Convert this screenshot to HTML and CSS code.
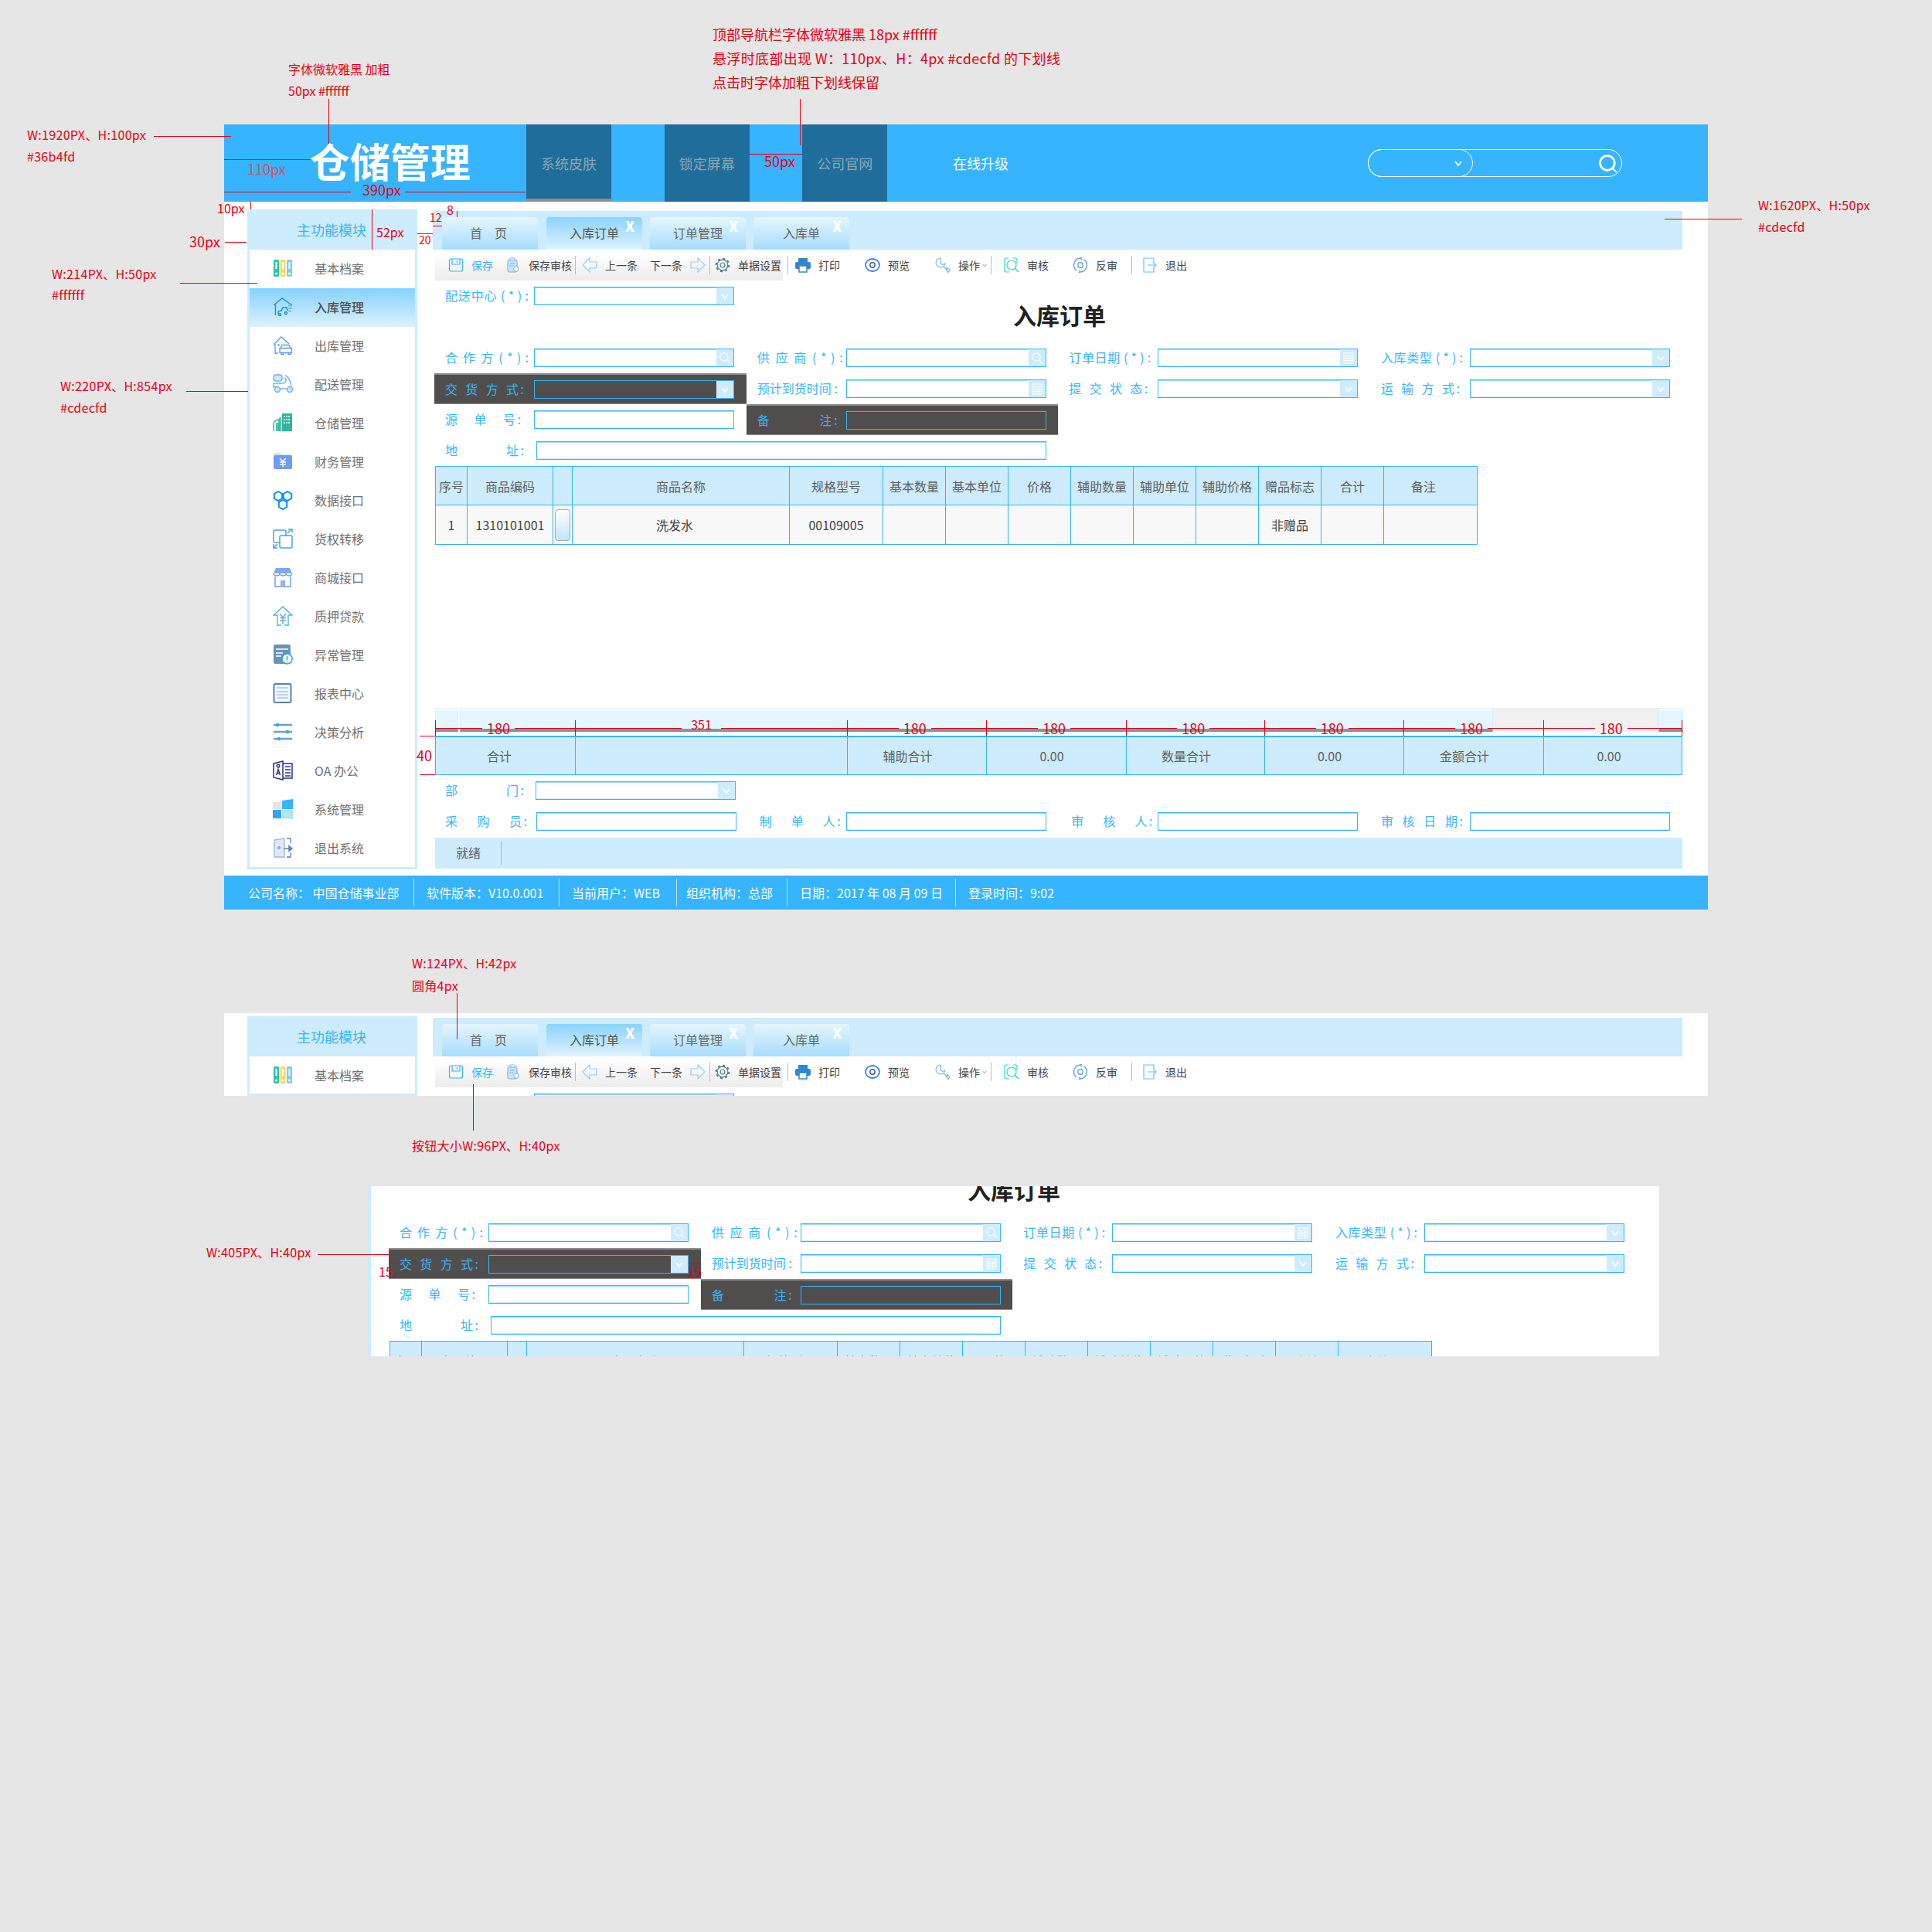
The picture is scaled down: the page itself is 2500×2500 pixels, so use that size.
FILE: index.html
```html
<!DOCTYPE html>
<html lang="zh-CN">
<head>
    <meta charset="UTF-8">
    <meta name="viewport" content="width=device-width, initial-scale=1.0">
    <title>仓储管理</title>
    <link rel="stylesheet" href="styles.css">
</head>
<body>
<svg class="sprite" xmlns="http://www.w3.org/2000/svg">
    <symbol id="i-files" viewBox="0 0 26 26">
        <rect x="1" y="2" width="7" height="22" rx="1.5" fill="#2ec4a6"/><rect x="9.5" y="2" width="7" height="22" rx="1.5" fill="#ffd966"/><rect x="18" y="2" width="7" height="22" rx="1.5" fill="#7fcbf8"/>
        <path d="M4.5 5v9M13 5v9M21.5 5v9" stroke="#fff" stroke-width="2"/>
        <circle cx="4.5" cy="20" r="1.5" fill="#fff"/><circle cx="13" cy="20" r="1.5" fill="#fff"/><circle cx="21.5" cy="20" r="1.5" fill="#fff"/>
    </symbol>
    <symbol id="i-in" viewBox="0 0 26 26">
        <g fill="none" stroke="#1d8fdd" stroke-width="1.5"><path d="M1 11 12 2l13 9M3.500 10v14"/><path d="M7 22v-3l4-1 2-4h5l1 4"/><circle cx="9" cy="23" r="1.600"/><circle cx="17" cy="21" r="1.600"/><path d="M20 11.500h5M20 15h5M20 18.500h4" stroke="#55b6ee"/></g>
    </symbol>
    <symbol id="i-out" viewBox="0 0 26 26">
        <g fill="none" stroke="#5f9bd8" stroke-width="1.300"><path d="M1 12 11 2l10 9M3 11v12h4"/><path d="M10 16.500l2-4h9l2 4h1.500v6H9v-6zM10 16.500h14"/><path d="M11 22.500v2h3v-2M20 22.500v2h3v-2"/><circle cx="7.500" cy="12.500" r=".7"/></g>
    </symbol>
    <symbol id="i-scooter" viewBox="0 0 26 26">
        <g fill="none" stroke="#74b4e6" stroke-width="1.400"><rect x="1" y="1" width="11" height="8" rx="3" fill="#cfe7f9"/><path d="M16 2c5 1 8 10 8 17H9c-2-2-7-3-8-2v-5h10c4 0 6-2 6-4 0-2-1-3-2-3"/><circle cx="6" cy="20" r="3.500" fill="#cfe7f9"/><circle cx="22" cy="20" r="3.500" fill="#cfe7f9"/></g>
    </symbol>
    <symbol id="i-city" viewBox="0 0 26 26">
        <path d="M1 24v-9c0-3 2-5 6-6h1v15" fill="none" stroke="#2bb89c" stroke-width="1.400"/><path d="M4 22v-9h4V7l3-2V24H4z" fill="#2bb89c" opacity=".8"/><rect x="12" y="1" width="13" height="23" fill="#2bb89c"/>
        <path d="M15 4v2M18 4v2M21 4v2M15 8v2M18 8v2M21 8v2M15 12v2M18 12v2M21 12v2" stroke="#fff" stroke-width="1.500"/>
    </symbol>
    <symbol id="i-folder" viewBox="0 0 26 26">
        <path d="M1 6c0-3 1-4 3-4h5c2 0 3 1 3 4z" fill="#cfe0fb"/><rect x="1" y="5" width="24" height="18" rx="2" fill="#6e9cf0"/><path d="M9 9l4 4 4-4M13 13v7M9 14h8M9 17h8" stroke="#fff" stroke-width="1.400" fill="none"/>
    </symbol>
    <symbol id="i-hex" viewBox="0 0 26 26">
        <g fill="none" stroke="#0a8fee" stroke-width="2"><path d="M7 2l5.200 3v6L7 14l-5.200-3V5z"/><path d="M19 2l5.200 3v6L19 14l-5.200-3V5z"/><path d="M13 13l5.200 3v6L13 25l-5.200-3v-6z"/></g>
    </symbol>
    <symbol id="i-transfer" viewBox="0 0 26 26">
        <g fill="none" stroke="#4aa8d8" stroke-width="1.500"><rect x="1" y="2" width="16" height="16" rx="2"/><rect x="9" y="9" width="16" height="16" rx="2" fill="#fff"/><path d="M19 6l5-5M20 1h5v4M1 20v5h5M1 25l5-5"/></g>
    </symbol>
    <symbol id="i-shop" viewBox="0 0 26 26">
        <path d="M4 1h18l3 7H1z" fill="#7fa8f0"/><path d="M1 8a4 3 0 0 0 8 0 4 3 0 0 0 8 0 4 3 0 0 0 8 0" fill="none" stroke="#6fa0ee" stroke-width="1.500"/><path d="M3 12v13h20V12" fill="none" stroke="#6fa0ee" stroke-width="1.500"/><rect x="10" y="17" width="6" height="8" fill="#8fb4f2"/>
    </symbol>
    <symbol id="i-pawn" viewBox="0 0 26 26">
        <path d="M11 25H6V12H1L13 1l12 11h-5v13h-5M9 10l4 5 4-5M13 15v9M9 15.500h8M9 19h8" fill="none" stroke="#55b2e0" stroke-width="1.400"/>
    </symbol>
    <symbol id="i-alert" viewBox="0 0 26 26">
        <rect x="1" y="0" width="22" height="25" rx="2" fill="#6b93b8"/><path d="M4 6h16M4 11h9M4 15h7" stroke="#fff" stroke-width="1.500"/><circle cx="18.500" cy="18.500" r="6.500" fill="#fff" stroke="#2fa0f0" stroke-width="1.500"/><path d="M18.500 15v5M18.500 21v1.500" stroke="#2fa0f0" stroke-width="1.500"/>
    </symbol>
    <symbol id="i-report" viewBox="0 0 26 26">
        <rect x="1.500" y="1" width="22" height="24" rx="1.500" fill="#f3f8fd" stroke="#2a5a9e" stroke-width="1.500"/><path d="M5 6h15M5 11h15M5 15h15M5 19h15" stroke="#a8c8e8" stroke-width="1.600"/>
    </symbol>
    <symbol id="i-sliders" viewBox="0 0 26 26">
        <path d="M1 4h24M1 13h24M1 22h24" stroke="#6f9fcc" stroke-width="2.400"/><circle cx="6" cy="4" r="2.200" fill="#36a6f0"/><circle cx="19" cy="13" r="2.200" fill="#36a6f0"/><circle cx="8" cy="22" r="2.200" fill="#36a6f0"/>
    </symbol>
    <symbol id="i-oa" viewBox="0 0 26 26">
        <g fill="none" stroke="#2a2f86" stroke-width="1.500"><path d="M1 4l12-3v24L1 22z"/><path d="M13 4h12v19H13"/><circle cx="7" cy="7" r="1.800"/><path d="M4.500 19 7 11.500 9.500 19M5.500 16.500h3M16 8h7M16 12h7M16 16h7M16 20h7"/></g>
    </symbol>
    <symbol id="i-win" viewBox="0 0 26 26">
        <path d="M0 4l11-1v10H0z" fill="#e4e4e4"/><path d="M12 2l14-2v13H12z" fill="#36b4fd"/><path d="M0 14h11v11H0z" fill="#36a6f0"/><path d="M12 14h14v12l-14-1z" fill="#b0e6fb"/>
    </symbol>
    <symbol id="i-quit" viewBox="0 0 26 26">
        <path d="M2 3l13-2v24H2z" fill="#e2e8fa" stroke="#9fb5e8" stroke-width="1.300"/><circle cx="8" cy="13" r="1.400" fill="none" stroke="#5a7cc0"/><path d="M18 1h5v6M23 19v6h-5" fill="none" stroke="#5a7cc0" stroke-width="1.300"/><path d="M14 14h10M21 10.500l4 3.500-4 3.500z" fill="#5a7cc0" stroke="#5a7cc0" stroke-width="1.400"/>
    </symbol>

    <symbol id="t-save" viewBox="0 0 20 20">
        <g fill="none" stroke="#36b4fd" stroke-width="1.200"><rect x="1.500" y="2" width="17" height="16" rx="2"/><path d="M5 2v7h10V2M11.500 4v3"/></g>
    </symbol>
    <symbol id="t-clip" viewBox="0 0 20 20">
        <rect x="3" y="3" width="12" height="16" rx="2" fill="#cfe4f6" stroke="#6fb3e8"/><rect x="6" y="1" width="6" height="3.500" rx="1" fill="#fff" stroke="#6fb3e8"/><path d="M5.500 8h7M5.500 11h5" stroke="#6fb3e8"/><circle cx="14" cy="15" r="3.200" fill="#fff" stroke="#6fb3e8"/>
    </symbol>
    <symbol id="t-left" viewBox="0 0 20 20"><path d="M10 1 1 10l9 9v-5h9V6h-9z" fill="none" stroke="#8fd0f8" stroke-width="1.200"/></symbol>
    <symbol id="t-right" viewBox="0 0 20 20"><path d="M10 1l9 9-9 9v-5H1V6h9z" fill="none" stroke="#8fd0f8" stroke-width="1.200"/></symbol>
    <symbol id="t-gear" viewBox="0 0 20 20">
        <g fill="none" stroke="#4d7d90"><circle cx="10" cy="10" r="6.800" stroke-width="1.200"/><circle cx="10" cy="10" r="8.300" stroke-width="2" stroke-dasharray="3 3.500"/><circle cx="10" cy="10" r="3" stroke-width="1.200"/></g>
    </symbol>
    <symbol id="t-print" viewBox="0 0 20 20">
        <rect x="4" y="1" width="12" height="5" fill="#2f87d0"/><rect x="0" y="6" width="20" height="9" rx="2" fill="#2f87d0"/><rect x="5" y="11" width="10" height="8" fill="#fff" stroke="#2f87d0" stroke-width="1.500"/>
    </symbol>
    <symbol id="t-eye" viewBox="0 0 20 20"><ellipse cx="10" cy="10" rx="9" ry="8" fill="none" stroke="#3b82e6" stroke-width="1.800"/><circle cx="10" cy="10" r="3.200" fill="none" stroke="#4d5d80" stroke-width="1.500"/></symbol>
    <symbol id="t-wrench" viewBox="0 0 20 20"><path d="M7 1a6 6 0 1 0 6 7L9.500 9.500 6.500 6.500zM11.500 12l5 5M14 15.500l2.500-2 3 3-2.500 3z" fill="none" stroke="#7cb8e8" stroke-width="1.200"/></symbol>
    <symbol id="t-audit" viewBox="0 0 20 20">
        <g fill="none" stroke="#28dccc" stroke-width="1.200"><path d="M6 1H3a2 2 0 0 0-2 2v14a2 2 0 0 0 2 2h4M12 1h3a2 2 0 0 1 2 2v5"/><circle cx="10" cy="10" r="6"/><path d="M14.500 14.500 19 19" stroke-width="1.600"/></g>
    </symbol>
    <symbol id="t-undo" viewBox="0 0 20 20">
        <g fill="none" stroke="#5f9fdc" stroke-width="1.300"><path d="M11 1a9 9 0 0 0-6 16M9 19a9 9 0 0 0 6-16"/><path d="M12 0l-2 1.500 2 1.500M8 20l2-1.500L8 17"/><rect x="7" y="7" width="6" height="6" rx="1"/></g>
    </symbol>
    <symbol id="t-exit" viewBox="0 0 20 20"><path d="M15 6V1H2v18h13v-5M7 10h11M14 6l4 4-4 4" fill="none" stroke="#60c8f0" stroke-width="1.200"/></symbol>
    <symbol id="a-down" viewBox="0 0 16 16"><path d="M4 6l4 5 4-5" fill="none" stroke="#fff" stroke-width="1.800"/></symbol>
    <symbol id="a-search" viewBox="0 0 16 16"><circle cx="7" cy="7" r="5.200" fill="none" stroke="#fff" stroke-width="1.200"/><path d="M11 11l4 4" stroke="#fff" stroke-width="1.200"/></symbol>
    <symbol id="a-date" viewBox="0 0 16 16"><rect x="2" y="2" width="12" height="13" fill="none" stroke="#fff"/><path d="M2 5.500h12M2 8.500h12M2 11.500h12M6 5.500v9M10 5.500v9" stroke="#fff"/></symbol>
    <symbol id="h-search" viewBox="0 0 20 20"><circle cx="9.500" cy="9.500" r="7.500" fill="none" stroke="#fff" stroke-width="2.200"/><path d="M15 15l4 4" stroke="#fff" stroke-width="1.500"/></symbol>
</svg>

<div class="canvas">

    <section class="window window-main">
        <header class="topbar">
            <div class="logo">仓储管理</div>
            <nav class="nav">
                <a class="nav-item nav-hover">系统皮肤</a>
                <a class="nav-item nav-dim">锁定屏幕</a>
                <a class="nav-item nav-dim">公司官网</a>
                <a class="nav-item nav-plain">在线升级</a>
            </nav>
            <div class="search">
                <div class="search-type"><svg class="search-caret"><use href="#a-down"/></svg></div>
                <svg class="search-icon"><use href="#h-search"/></svg>
            </div>
        </header>

        <div class="workspace">
            <aside class="sidebar sidebar-full">
                <div class="side-head">主功能模块</div>
                <a class="side-item"><svg class="side-icon"><use href="#i-files"/></svg>基本档案</a>
                <a class="side-item active"><svg class="side-icon"><use href="#i-in"/></svg>入库管理</a>
                <a class="side-item"><svg class="side-icon"><use href="#i-out"/></svg>出库管理</a>
                <a class="side-item"><svg class="side-icon"><use href="#i-scooter"/></svg>配送管理</a>
                <a class="side-item"><svg class="side-icon"><use href="#i-city"/></svg>仓储管理</a>
                <a class="side-item"><svg class="side-icon"><use href="#i-folder"/></svg>财务管理</a>
                <a class="side-item"><svg class="side-icon"><use href="#i-hex"/></svg>数据接口</a>
                <a class="side-item"><svg class="side-icon"><use href="#i-transfer"/></svg>货权转移</a>
                <a class="side-item"><svg class="side-icon"><use href="#i-shop"/></svg>商城接口</a>
                <a class="side-item"><svg class="side-icon"><use href="#i-pawn"/></svg>质押贷款</a>
                <a class="side-item"><svg class="side-icon"><use href="#i-alert"/></svg>异常管理</a>
                <a class="side-item"><svg class="side-icon"><use href="#i-report"/></svg>报表中心</a>
                <a class="side-item"><svg class="side-icon"><use href="#i-sliders"/></svg>决策分析</a>
                <a class="side-item"><svg class="side-icon"><use href="#i-oa"/></svg>OA 办公</a>
                <a class="side-item"><svg class="side-icon"><use href="#i-win"/></svg>系统管理</a>
                <a class="side-item"><svg class="side-icon"><use href="#i-quit"/></svg>退出系统</a>
            </aside>

            <div class="content">
                <div class="tabs">
                    <div class="tab">首　页</div>
                    <div class="tab tab-active">入库订单<span class="tab-close">X</span></div>
                    <div class="tab">订单管理<span class="tab-close">X</span></div>
                    <div class="tab">入库单<span class="tab-close">X</span></div>
                </div>
                <div class="toolbar">
                    <a class="tool tool-save"><svg class="tool-icon"><use href="#t-save"/></svg>保存</a>
                    <a class="tool"><svg class="tool-icon"><use href="#t-clip"/></svg>保存审核</a>
                    <i class="tool-sep"></i>
                    <a class="tool"><svg class="tool-icon"><use href="#t-left"/></svg>上一条</a>
                    <a class="tool">下一条<svg class="tool-icon"><use href="#t-right"/></svg></a>
                    <i class="tool-sep"></i>
                    <a class="tool"><svg class="tool-icon"><use href="#t-gear"/></svg>单据设置</a>
                    <i class="tool-sep"></i>
                    <a class="tool"><svg class="tool-icon"><use href="#t-print"/></svg>打印</a>
                    <a class="tool"><svg class="tool-icon"><use href="#t-eye"/></svg>预览</a>
                    <a class="tool"><svg class="tool-icon"><use href="#t-wrench"/></svg>操作<svg class="tool-caret"><use href="#a-down"/></svg></a>
                    <i class="tool-sep"></i>
                    <a class="tool"><svg class="tool-icon"><use href="#t-audit"/></svg>审核</a>
                    <a class="tool"><svg class="tool-icon"><use href="#t-undo"/></svg>反审</a>
                    <i class="tool-sep"></i>
                    <a class="tool"><svg class="tool-icon"><use href="#t-exit"/></svg>退出</a>
                </div>

                <div class="form-grid">
                    <div class="field"><label class="label lw-108">配送中心 ( * ) :</label><div class="input"><span class="addon"><svg><use href="#a-down"/></svg></span></div></div>
                </div>
                <h1 class="doc-title">入库订单</h1>
                <div class="form-grid">
                    <div class="field"><label class="label lw-108">合 作 方 ( * ) :</label><div class="input"><span class="addon"><svg><use href="#a-search"/></svg></span></div></div>
                    <div class="field"><label class="label lw-111">供 应 商 ( * ) :</label><div class="input"><span class="addon"><svg><use href="#a-search"/></svg></span></div></div>
                    <div class="field"><label class="label lw-106">订单日期 ( * ) :</label><div class="input"><span class="addon"><svg><use href="#a-date"/></svg></span></div></div>
                    <div class="field"><label class="label lw-106">入库类型 ( * ) :</label><div class="input"><span class="addon"><svg><use href="#a-down"/></svg></span></div></div>
                    <div class="field field-dark"><label class="label lw-102">交 货 方 <span class="nb">式 :</span></label><div class="input"><span class="addon"><svg><use href="#a-down"/></svg></span></div></div>
                    <div class="field"><label class="label lw-104">预计到货时间 :</label><div class="input"><span class="addon"><svg><use href="#a-date"/></svg></span></div></div>
                    <div class="field"><label class="label lw-102">提 交 状 <span class="nb">态 :</span></label><div class="input"><span class="addon"><svg><use href="#a-down"/></svg></span></div></div>
                    <div class="field"><label class="label lw-102">运 输 方 <span class="nb">式 :</span></label><div class="input"><span class="addon"><svg><use href="#a-down"/></svg></span></div></div>
                    <div class="field"><label class="label lw-98">源 单 <span class="nb">号 :</span></label><div class="input"></div></div>
                    <div class="field field-dark"><label class="label lw-104">备 <span class="nb">注 :</span></label><div class="input"></div></div>
                    <div class="field field-span"><label class="label label-addr lw-102">地 <span class="nb">址 :</span></label><div class="input input-wide"></div></div>
                </div>

                <div class="table-area">
                    <table class="goods">
                        <thead>
                            <tr><th>序号</th><th>商品编码</th><th></th><th>商品名称</th><th>规格型号</th><th>基本数量</th><th>基本单位</th><th>价格</th><th>辅助数量</th><th>辅助单位</th><th>辅助价格</th><th>赠品标志</th><th>合计</th><th>备注</th></tr>
                        </thead>
                        <tbody>
                            <tr><td>1</td><td>1310101001</td><td><span class="pick"></span></td><td>洗发水</td><td>00109005</td><td></td><td></td><td></td><td></td><td></td><td></td><td>非赠品</td><td></td><td></td></tr>
                        </tbody>
                    </table>
                </div>

                <div class="scroller">
                    <span class="thumb thumb-start"></span>
                    <span class="thumb thumb-main"></span>
                    <span class="track"></span>
                    <span class="thumb thumb-end"></span>
                </div>

                <div class="totals-wrap">
                    <div class="dims">
                        <div class="dim"><span>180</span></div>
                        <div class="dim dim-raised"><span>351</span></div>
                        <div class="dim"><span>180</span></div>
                        <div class="dim"><span>180</span></div>
                        <div class="dim"><span>180</span></div>
                        <div class="dim"><span>180</span></div>
                        <div class="dim"><span>180</span></div>
                        <div class="dim"><span>180</span></div>
                    </div>
                    <div class="totals">
                        <div>合计</div><div></div><div>辅助合计</div><div>0.00</div><div>数量合计</div><div>0.00</div><div>金额合计</div><div>0.00</div>
                    </div>
                </div>

                <div class="form-grid">
                    <div class="field field-full"><label class="label label-bottom lw-102">部 <span class="nb">门 :</span></label><div class="input"><span class="addon"><svg><use href="#a-down"/></svg></span></div></div>
                    <div class="field"><label class="label label-bottom-wide lw-106">采 购 <span class="nb">员 :</span></label><div class="input"></div></div>
                    <div class="field"><label class="label label-inset lw-105">制 单 <span class="nb">人 :</span></label><div class="input"></div></div>
                    <div class="field"><label class="label label-inset lw-105">审 核 <span class="nb">人 :</span></label><div class="input"></div></div>
                    <div class="field"><label class="label lw-106">审 核 日 <span class="nb">期 :</span></label><div class="input"></div></div>
                </div>

                <div class="ready"><span class="ready-text">就绪</span></div>
            </div>
        </div>

        <footer class="statusbar">
            <div>公司名称： 中国仓储事业部</div>
            <div>软件版本：V10.0.001</div>
            <div>当前用户：WEB</div>
            <div>组织机构：总部</div>
            <div>日期：2017 年 08 月 09 日</div>
            <div>登录时间：9:02</div>
        </footer>
    </section>

    <section class="window window-strip">
        <div class="workspace workspace-strip">
            <aside class="sidebar">
                <div class="side-head">主功能模块</div>
                <a class="side-item"><svg class="side-icon"><use href="#i-files"/></svg>基本档案</a>
            </aside>
            <div class="content">
                <div class="tabs">
                    <div class="tab">首　页</div>
                    <div class="tab tab-active">入库订单<span class="tab-close">X</span></div>
                    <div class="tab">订单管理<span class="tab-close">X</span></div>
                    <div class="tab">入库单<span class="tab-close">X</span></div>
                </div>
                <div class="toolbar">
                    <a class="tool tool-save"><svg class="tool-icon"><use href="#t-save"/></svg>保存</a>
                    <a class="tool"><svg class="tool-icon"><use href="#t-clip"/></svg>保存审核</a>
                    <i class="tool-sep"></i>
                    <a class="tool"><svg class="tool-icon"><use href="#t-left"/></svg>上一条</a>
                    <a class="tool">下一条<svg class="tool-icon"><use href="#t-right"/></svg></a>
                    <i class="tool-sep"></i>
                    <a class="tool"><svg class="tool-icon"><use href="#t-gear"/></svg>单据设置</a>
                    <i class="tool-sep"></i>
                    <a class="tool"><svg class="tool-icon"><use href="#t-print"/></svg>打印</a>
                    <a class="tool"><svg class="tool-icon"><use href="#t-eye"/></svg>预览</a>
                    <a class="tool"><svg class="tool-icon"><use href="#t-wrench"/></svg>操作<svg class="tool-caret"><use href="#a-down"/></svg></a>
                    <i class="tool-sep"></i>
                    <a class="tool"><svg class="tool-icon"><use href="#t-audit"/></svg>审核</a>
                    <a class="tool"><svg class="tool-icon"><use href="#t-undo"/></svg>反审</a>
                    <i class="tool-sep"></i>
                    <a class="tool"><svg class="tool-icon"><use href="#t-exit"/></svg>退出</a>
                </div>
                <div class="form-grid">
                    <div class="field"><label class="label lw-108"></label><div class="input"><span class="addon"></span></div></div>
                </div>
            </div>
        </div>
    </section>

    <section class="window window-form">
        <div class="content">
            <h1 class="doc-title">入库订单</h1>
            <div class="form-grid">
                <div class="field"><label class="label lw-108">合 作 方 ( * ) :</label><div class="input"><span class="addon"><svg><use href="#a-search"/></svg></span></div></div>
                <div class="field"><label class="label lw-111">供 应 商 ( * ) :</label><div class="input"><span class="addon"><svg><use href="#a-search"/></svg></span></div></div>
                <div class="field"><label class="label lw-106">订单日期 ( * ) :</label><div class="input"><span class="addon"><svg><use href="#a-date"/></svg></span></div></div>
                <div class="field"><label class="label lw-106">入库类型 ( * ) :</label><div class="input"><span class="addon"><svg><use href="#a-down"/></svg></span></div></div>
                <div class="field field-dark"><label class="label lw-102">交 货 方 <span class="nb">式 :</span></label><div class="input"><span class="addon"><svg><use href="#a-down"/></svg></span></div></div>
                <div class="field"><label class="label lw-104">预计到货时间 :</label><div class="input"><span class="addon"><svg><use href="#a-date"/></svg></span></div></div>
                <div class="field"><label class="label lw-102">提 交 状 <span class="nb">态 :</span></label><div class="input"><span class="addon"><svg><use href="#a-down"/></svg></span></div></div>
                <div class="field"><label class="label lw-102">运 输 方 <span class="nb">式 :</span></label><div class="input"><span class="addon"><svg><use href="#a-down"/></svg></span></div></div>
                <div class="field"><label class="label lw-98">源 单 <span class="nb">号 :</span></label><div class="input"></div></div>
                <div class="field field-dark"><label class="label lw-104">备 <span class="nb">注 :</span></label><div class="input"></div></div>
                <div class="field field-span"><label class="label label-addr lw-102">地 <span class="nb">址 :</span></label><div class="input input-wide"></div></div>
            </div>
            <div class="table-area">
                <table class="goods">
                    <thead>
                        <tr><th>序号</th><th>商品编码</th><th></th><th>商品名称</th><th>规格型号</th><th>基本数量</th><th>基本单位</th><th>价格</th><th>辅助数量</th><th>辅助单位</th><th>辅助价格</th><th>赠品标志</th><th>合计</th><th>备注</th></tr>
                    </thead>
                </table>
            </div>
        </div>
    </section>

    <!-- red spec notes -->
    <div class="note n-logo">字体微软雅黑 加粗<br>50px #ffffff</div>
    <div class="note n-nav">顶部导航栏字体微软雅黑 18px #ffffff<br><span class="note-wide">悬浮时底部出现 W：110px、H：4px #cdecfd 的下划线</span><br>点击时字体加粗下划线保留</div>
    <div class="note note-latin n-1920">W:1920PX、H:100px<br>#36b4fd</div>
    <div class="note note-big n-110">110px</div>
    <div class="note note-big n-390">390px</div>
    <div class="note note-big n-50">50px</div>
    <div class="note n-10">10px</div>
    <div class="note note-big n-30">30px</div>
    <div class="note n-52">52px</div>
    <div class="note note-small n-12">12</div>
    <div class="note n-8">8</div>
    <div class="note note-small n-20">20</div>
    <div class="note note-latin n-214">W:214PX、H:50px<br>#ffffff</div>
    <div class="note note-latin n-220">W:220PX、H:854px<br>#cdecfd</div>
    <div class="note note-latin n-1620">W:1620PX、H:50px<br>#cdecfd</div>
    <div class="note note-latin n-124">W:124PX、H:42px<br>圆角4px</div>
    <div class="note note-latin n-96">按钮大小W:96PX、H:40px</div>
    <div class="note note-latin n-405">W:405PX、H:40px</div>
    <div class="note n-15a">15</div>
    <div class="note n-15b">15</div>
    <div class="note note-big n-40">40</div>

    <i class="rule r-1920"></i>
    <i class="rule r-110"></i>
    <i class="rule r-390a"></i>
    <i class="rule r-390b"></i>
    <i class="rule r-50"></i>
    <i class="rule r-30"></i>
    <i class="rule r-12"></i>
    <i class="rule r-20"></i>
    <i class="rule r-214"></i>
    <i class="rule r-220"></i>
    <i class="rule r-1620"></i>
    <i class="rule r-40a"></i>
    <i class="rule r-40b"></i>
    <i class="rule r-405"></i>
    <i class="rule r-15a"></i>
    <i class="rule r-15b"></i>
    <i class="rule r-logo"></i>
    <i class="rule r-nav"></i>
    <i class="rule r-10"></i>
    <i class="rule r-52"></i>
    <i class="rule r-8"></i>
    <i class="rule r-124"></i>
    <i class="rule r-96"></i>
</div>
</body>
</html>
```

FILE: styles.css
```css
* { box-sizing: border-box; }
html, body { margin: 0; padding: 0; }
body { background-color: #e6e6e6; font-family: "Noto Sans CJK SC", "Noto Sans", sans-serif; font-size: 16px; color: #666; }
a { text-decoration: none; color: inherit; }
.sprite { position: absolute; width: 0; height: 0; }
.canvas { position: relative; width: 2500px; height: 2500px; overflow: hidden; }

/* artboards on the spec canvas */
.window { position: absolute; background-color: white; overflow: hidden; }
.window-main { left: 290px; top: 161px; width: 1920px; height: 1016px; }
.window-strip { left: 290px; top: 1311px; width: 1920px; height: 107px; }
.window-form { left: 476px; top: 1535px; width: 1671px; height: 220px; padding-left: 21px; border-left: 4px solid #cdecfd; }

/* top bar */
.topbar { display: flex; height: 100px; background-color: #36b4fd; }
.logo { flex: none; width: 280px; margin-left: 111px; font-size: 52px; font-weight: 700; line-height: 94px; color: white; white-space: nowrap; }
.nav { display: flex; gap: 68.67px; }
.nav-item { display: flex; align-items: center; justify-content: center; width: 110px; font-size: 18px; color: white; }
.nav-dim, .nav-hover { background-color: #1f6d9b; color: #8ea6b3; }
.nav-hover { border-bottom: 4px solid #8b8f91; padding-top: 3px; }
.nav-plain { padding-right: 6px; }
.search { position: relative; display: flex; align-items: center; justify-content: flex-end; width: 329px; height: 36px; margin: 32px 111px 0 auto; padding-right: 5px; border: 1.5px solid white; border-radius: 18px; }
.search-type { position: absolute; left: -1.5px; top: -1.5px; width: 136px; height: 36px; border: 1.5px solid white; border-radius: 18px; display: flex; align-items: center; justify-content: flex-end; padding-right: 10px; }
.search-caret { width: 16px; height: 16px; }
.search-icon { width: 25px; height: 25px; }

/* body of the window */
.workspace { display: flex; height: 872px; padding: 10px 0 0 30px; }
.workspace-strip { height: 107px; padding-top: 4px; }
.sidebar { flex: none; width: 220px; border: 3px solid #cdecfd; background-color: white; overflow: hidden; }
.sidebar-full { height: 854px; }
.side-head { height: 52px; margin: -3px -3px 0; padding-top: 3px; padding-right: 2px; background-color: #cdecfd; color: #36b4fd; font-size: 18px; line-height: 47px; text-align: center; }
.side-item { display: flex; align-items: center; height: 50px; padding: 0 0 2px 30px; gap: 28px; color: #707070; }
.side-item.active { background: linear-gradient(#86d2fd, #dcf2fe); color: #505050; font-weight: 500; }
.side-icon { flex: none; width: 26px; height: 26px; }

.content { flex: none; width: 1617px; margin-left: 20px; margin-top: 2px; }
.window-form .content { margin-top: 0; margin-left: 0; }

/* tabs */
.tabs { display: flex; align-items: flex-end; gap: 10px; height: 50px; padding-left: 12px; background-color: #cdecfd; }
.tab { position: relative; width: 124px; height: 42px; border-radius: 4px 4px 0 0; background: linear-gradient(#e6f6fe, #a6ddfd); font-size: 16px; line-height: 40px; text-align: center; color: #666; }
.tab:first-child { margin-right: 1px; word-spacing: 2px; padding-right: 4px; }
.tab-active { background: linear-gradient(#8ad3fd, #dff3fe); color: #505050; }
.tab-close { position: absolute; top: -9px; right: 10px; font-size: 18px; font-weight: 900; color: white; }

/* toolbar */
.toolbar { display: grid; grid-template-columns: 74px 90px 9px 88px 77px 7px 94px 10px 90px 91px 72px 17px 89px 76px 14px 1fr; align-items: center; height: 40px; padding: 0 0 0 20px; background: linear-gradient(white, #ececec) no-repeat 3px 4px / 450px 36px; font-size: 14px; color: #444; }
.tool { display: flex; align-items: center; gap: 10px; white-space: nowrap; }
.tool-save { color: #36b4fd; }
.tool-icon { flex: none; width: 20px; height: 20px; }
.tool-caret { width: 10px; height: 10px; margin-left: -9px; stroke: #aaa; filter: brightness(.7); }
.tool-sep { width: 1px; height: 24px; background-color: #bdbdbd; }

/* form */
.form-grid { display: grid; grid-template-columns: repeat(4, 403.67px); grid-auto-rows: 40px; margin-left: 2px; }
.field { display: flex; align-items: center; padding-left: 14px; }
.field-full { grid-column: 1 / -1; }
.field-span { grid-column: 1 / span 2; }
.field-dark { background-color: #504e4d; border-top: 2px solid #8c8c8c; border-bottom: 1px solid #8c8c8c; }
.label { flex: none; width: 115px; padding-bottom: 2px; font-size: 16px; color: #36b4fd; white-space: nowrap; text-align-last: justify; }
.nb { display: inline-block; word-spacing: -1px; }
.lw-98 { padding-right: 17px; }
.lw-102 { padding-right: 13px; }
.lw-104 { padding-right: 11px; }
.lw-105 { padding-right: 10px; }
.lw-106 { padding-right: 9px; }
.lw-108 { padding-right: 7px; }
.lw-111 { padding-right: 4px; }
.label-addr { width: 118px; padding-right: 16px; }
.label-bottom { width: 117px; padding-right: 15px; }
.label-bottom-wide { width: 118px; padding-right: 12px; }
.label-inset { padding-left: 3px; padding-right: 7px; }
.input { display: flex; justify-content: flex-end; width: 259px; height: 24px; border: 1px solid #36b4fd; box-shadow: inset 0 1px #9bdcfe, inset 0 -1px #c8ebfe; background-color: white; }
.field-dark .input { background-color: transparent; box-shadow: none; border-width: 1.5px 1px; }
.input-wide { width: 660px; }
.addon { display: flex; align-items: center; justify-content: center; width: 22px; background-color: #cdecfd; }
.addon svg { width: 16px; height: 16px; }

.doc-title { height: 40px; margin: 0; padding-left: 5px; font-size: 30px; font-weight: 700; line-height: 8px; text-align: center; color: #222; }

/* goods table */
.table-area { height: 313px; padding-left: 3px; }
.goods { width: 1349px; table-layout: fixed; border-collapse: collapse; }
.goods th, .goods td { border: 1px solid #36b4fd; font-weight: 400; font-size: 16px; text-align: center; color: #606060; padding: 0; }
.goods th { height: 50px; background-color: #cdecfd; }
.goods td { height: 51px; background-color: #f8f8f8; color: #444; }
.goods th:nth-child(1) { width: 41px; }
.goods th:nth-child(2) { width: 111px; }
.goods th:nth-child(3) { width: 25px; }
.goods th:nth-child(4) { width: 281px; }
.goods th:nth-child(5) { width: 121px; }
.goods th:nth-child(n+6):nth-child(-n+13) { width: 81px; }
.goods th:last-child { padding-right: 18px; }
.goods td:nth-child(4) { padding-right: 16px; }
.pick { display: block; width: 20px; height: 41px; margin: auto; border: 1px solid #aaa; border-radius: 4px; background: linear-gradient(white, #bfe6fd); }

.scroller { display: flex; height: 31px; margin-left: 3px; width: 1615px; margin-bottom: 5px; }
.thumb { border: 1px solid #d8effc; border-radius: 2px 2px 0 0; border-bottom: 4px solid #8c9497; background-color: #e4f6ff; box-shadow: inset 0 2px #fff; }
.thumb-start { width: 30px; margin-right: 2px; }
.thumb-main { width: 1337px; }
.track { flex: 1; background-color: #f0f0f0; }
.thumb-end { width: 32px; }

/* totals and the red 180 rulers that lie over them */
.totals-wrap { position: relative; margin-left: 3px; width: 1614px; }
.totals, .dims { display: grid; grid-template-columns: 181px 352px 180px 181px 179px 180px 181px 180px; }
.totals { height: 51px; background-color: #cdecfd; border: 1px solid #36b4fd; border-top-width: 2px; }
.totals div { display: flex; align-items: center; justify-content: center; padding-right: 24px; border-right: 1px solid #36b4fd; color: #606060; }
.totals div:nth-child(even) { padding-right: 12px; }
.totals div:first-child { padding-right: 16px; }
.totals div:last-child { border-right: none; }
.dims { position: absolute; left: 0; top: -20px; height: 20px; width: 1614px; z-index: 2; border-right: 1px solid #e60012; }
.dim { display: flex; align-items: center; border-left: 1px solid #e60012; font-size: 18px; color: #e60012; }
.dim::before, .dim::after { content: ""; flex: 1; height: 1px; background-color: #e60012; }
.dim::before { flex: .92; }
.dim span { padding: 0 6px; line-height: 20px; }
.dim:first-child::before { flex: .77; }
.dim-raised span { position: relative; top: -5px; padding: 0 12px; font-size: 16px; }
.dim-raised::before { flex: .84; }

.ready { height: 40px; margin: 1px 0 0 3px; padding: 5px 0; width: 1614px; background-color: #cdecfd; }
.ready-text { display: block; width: 86px; height: 30px; padding-left: 27px; border-right: 1px solid #8fbfd9; line-height: 28px; color: #606060; }

/* footer */
.statusbar { display: grid; grid-template-columns: 246px 188px 152px 143px 218px 147px 1fr; align-items: center; height: 44px; background-color: #36b4fd; color: white; }
.statusbar div { height: 36px; padding-left: 16px; border-right: 1px solid #bfe5fb; line-height: 36px; white-space: nowrap; }
.statusbar div:first-child { padding-left: 31px; }
.statusbar div:nth-child(4) { padding-left: 12px; }
.statusbar div:last-child { border-right: none; }

/* spec notes */
.note { position: absolute; z-index: 3; margin-top: -2px; font-size: 16px; line-height: 28px; color: #e60012; white-space: nowrap; }
.note-big { font-size: 18px; }
.note-small { font-size: 14px; }
.note-latin { letter-spacing: .3px; }
.note-wide { letter-spacing: .35px; }
.n-logo { left: 373px; top: 77px; }
.n-nav { left: 922px; top: 31px; font-size: 18px; line-height: 31px; }
.n-1920 { left: 35px; top: 162px; }
.n-110 { left: 320px; top: 206px; color: #e8474f; }
.n-390 { left: 469px; top: 233px; }
.n-50 { left: 989px; top: 196px; }
.n-10 { left: 281px; top: 257px; }
.n-30 { left: 245px; top: 300px; }
.n-52 { left: 487px; top: 288px; }
.n-12 { left: 556px; top: 269px; }
.n-8 { left: 578px; top: 259px; }
.n-20 { left: 542px; top: 298px; }
.n-214 { left: 67px; top: 343px; line-height: 27px; }
.n-220 { left: 78px; top: 487px; }
.n-1620 { left: 2275px; top: 253px; }
.n-124 { left: 533px; top: 1234px; line-height: 29px; }
.n-96 { left: 533px; top: 1470px; }
.n-405 { left: 267px; top: 1608px; }
.n-15a { left: 490px; top: 1633px; }
.n-15b { left: 890px; top: 1633px; }
.n-40 { left: 539px; top: 965px; }

.rule { position: absolute; z-index: 3; width: 1px; height: 1px; background-color: #e60012; }
.r-1920 { left: 199px; top: 176px; width: 100px; }
.r-110 { left: 290px; top: 206px; width: 111px; }
.r-390a { left: 290px; top: 248px; width: 164px; }
.r-390b { left: 524px; top: 248px; width: 156px; }
.r-50 { left: 969px; top: 199px; width: 69px; }
.r-30 { left: 291px; top: 313px; width: 28px; }
.r-12 { left: 560px; top: 292px; width: 12px; }
.r-20 { left: 540px; top: 302px; width: 20px; }
.r-214 { left: 233px; top: 366px; width: 100px; }
.r-220 { left: 241px; top: 506px; width: 80px; }
.r-1620 { left: 2154px; top: 283px; width: 100px; }
.r-40a { left: 543px; top: 952px; width: 20px; }
.r-40b { left: 543px; top: 1002px; width: 20px; }
.r-405 { left: 411px; top: 1623px; width: 94px; }
.r-15a { left: 503px; top: 1634px; width: 14px; }
.r-15b { left: 892px; top: 1634px; width: 15px; }
.r-logo { left: 425px; top: 128px; height: 58px; }
.r-nav { left: 1035px; top: 128px; height: 60px; }
.r-10 { left: 324px; top: 261px; height: 10px; }
.r-52 { left: 481px; top: 271px; height: 52px; }
.r-8 { left: 591px; top: 273px; height: 8px; }
.r-124 { left: 591px; top: 1285px; height: 60px; }
.r-96 { left: 612px; top: 1403px; height: 60px; }
```
